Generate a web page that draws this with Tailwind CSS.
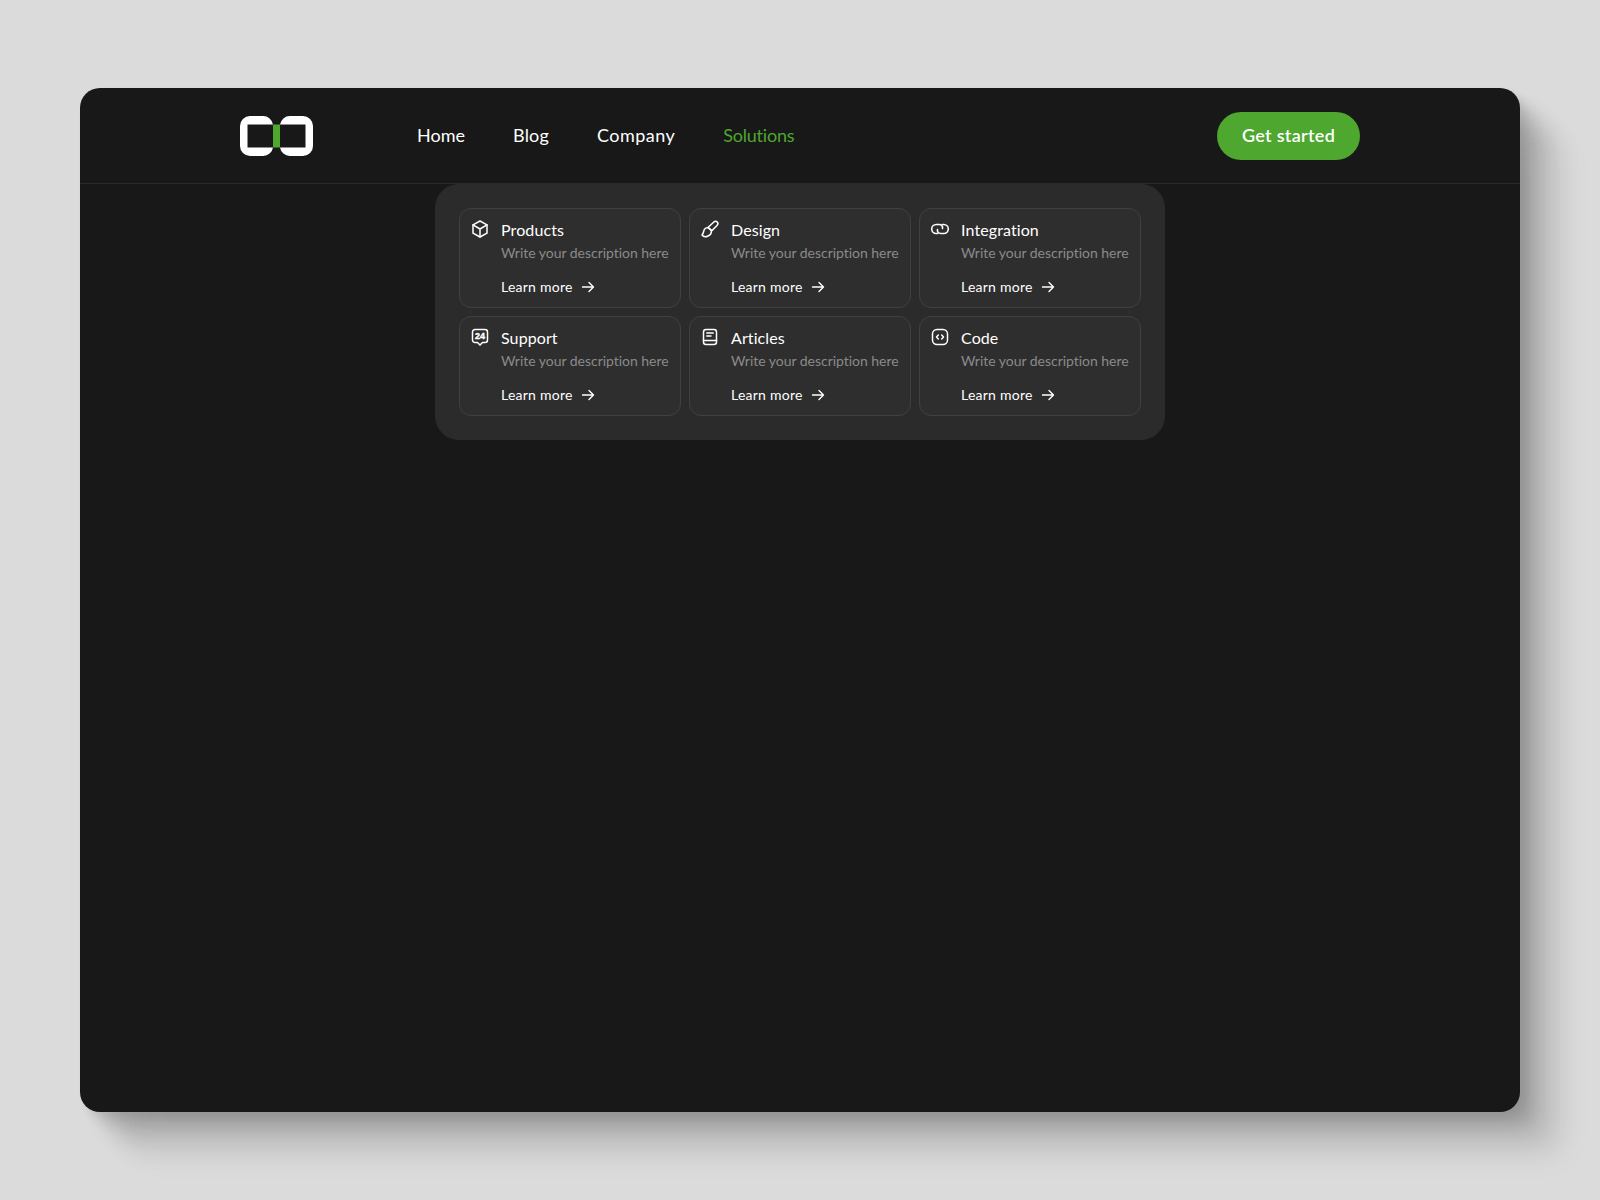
<!DOCTYPE html>
<html lang="en">
<head>
    <meta charset="UTF-8">
    <meta name="viewport" content="width=device-width, initial-scale=1.0">
    <title>Solutions menu</title>
    <script src="https://cdn.jsdelivr.net/npm/@tailwindcss/browser@4"></script>
</head>
<body class="min-h-screen bg-[#dbdbdb] font-['Lato',sans-serif]">
    <div class="pt-[88px] pl-[80px] pb-[88px]">
        <div class="w-[1440px] h-[1024px] rounded-[20px] bg-[#181818] shadow-[4px_4px_8px_rgba(0,0,0,0.06),12px_12px_14px_rgba(0,0,0,0.1),24px_24px_20px_rgba(0,0,0,0.1),38px_38px_24px_rgba(0,0,0,0.08),50px_50px_30px_rgba(0,0,0,0.03)]">
            <!-- Header -->
            <header class="h-[96px] px-[160px] flex items-center border-b border-[#2a2a2a]">
                <svg class="w-[73px] h-[40px] shrink-0" viewBox="0 0 73 40">
                    <path fill="#fff" fill-rule="evenodd" d="M10 0H23A10 10 0 0 1 33 8.5H7.5V31.5H33A10 10 0 0 1 23 40H10A10 10 0 0 1 0 30V10A10 10 0 0 1 10 0Z"/>
                    <path fill="#fff" fill-rule="evenodd" d="M50 0H63A10 10 0 0 1 73 10V30A10 10 0 0 1 63 40H50A10 10 0 0 1 40 31.5H65.5V8.5H40A10 10 0 0 1 50 0Z"/>
                    <rect x="33" y="8.5" width="7" height="23" fill="#4ea72e"/>
                </svg>
                <nav class="ml-[104px] flex items-center gap-[48px] text-[18px] text-white">
                    <a href="#">Home</a>
                    <a href="#" class="tracking-[0.2px]">Blog</a>
                    <a href="#" class="tracking-[0.45px]">Company</a>
                    <a href="#" class="text-[#4ea72e] tracking-[-0.2px]">Solutions</a>
                </nav>
                <button class="ml-auto w-[143px] h-[48px] rounded-full bg-[#4ea72e] text-white text-[18px] font-semibold tracking-[0.3px]">Get started</button>
            </header>

            <!-- Dropdown -->
            <div class="w-[730px] h-[256px] mx-auto p-[24px] rounded-[24px] bg-[#2b2b2b] grid grid-cols-3 gap-[8px]">
                <div class="h-[100px] rounded-[12px] border border-[#404040] bg-[#2e2e2e] pl-[10px] pt-[11px] flex gap-[11px]">
                    <svg class="w-[20px] h-[20px] shrink-0 mt-[-1px]" viewBox="0 0 20 20" fill="none" stroke="#fff" stroke-width="1.5" stroke-linejoin="round" stroke-linecap="round"><path d="M10 2 17 5.8V14.2L10 18 3 14.2V5.8Z"/><path d="M3 5.8 10 10 17 5.8M10 10V18"/></svg>
                    <div>
                        <div class="text-[16px] leading-[20px] text-white tracking-[0.1px]">Products</div>
                        <div class="mt-[3px] text-[14px] leading-[20px] text-[#8a8a8a] whitespace-nowrap tracking-[-0.03px]">Write your description here</div>
                        <div class="mt-[14px] flex items-center gap-[7px] text-[14px] leading-[20px] text-white tracking-[0.25px]">Learn more <svg class="w-[16px] h-[16px]" viewBox="0 0 16 16" fill="none" stroke="#fff" stroke-width="1.4" stroke-linecap="round" stroke-linejoin="round"><path d="M2.5 8H13.5M9 3.5 13.5 8 9 12.5"/></svg></div>
                    </div>
                </div>
                <div class="h-[100px] rounded-[12px] border border-[#404040] bg-[#2e2e2e] pl-[10px] pt-[11px] flex gap-[11px]">
                    <svg class="w-[20px] h-[20px] shrink-0 mt-[-1px]" viewBox="0 0 20 20" fill="none" stroke="#fff" stroke-width="1.5" stroke-linejoin="round" stroke-linecap="round"><path d="M8.2 8.2 13.6 3.2C14.8 2.2 16.6 2.4 17.3 3.1 18 3.8 18 5.3 17 6.4L11.8 11.8Z"/><path d="M8.2 8.6C5.8 8.8 4.2 10 3.8 12 3.4 14 2.8 15 2 16 3.5 18 6 18 8 17 10.5 16 11.5 14 11.4 11.8Z"/></svg>
                    <div>
                        <div class="text-[16px] leading-[20px] text-white tracking-[0.1px]">Design</div>
                        <div class="mt-[3px] text-[14px] leading-[20px] text-[#8a8a8a] whitespace-nowrap tracking-[-0.03px]">Write your description here</div>
                        <div class="mt-[14px] flex items-center gap-[7px] text-[14px] leading-[20px] text-white tracking-[0.25px]">Learn more <svg class="w-[16px] h-[16px]" viewBox="0 0 16 16" fill="none" stroke="#fff" stroke-width="1.4" stroke-linecap="round" stroke-linejoin="round"><path d="M2.5 8H13.5M9 3.5 13.5 8 9 12.5"/></svg></div>
                    </div>
                </div>
                <div class="h-[100px] rounded-[12px] border border-[#404040] bg-[#2e2e2e] pl-[10px] pt-[11px] flex gap-[11px]">
                    <svg class="w-[20px] h-[20px] shrink-0 mt-[-1px]" viewBox="0 0 20 20" fill="none" stroke="#fff" stroke-width="1.6" stroke-linecap="round"><path d="M7.5 14.5H6.2A4.2 4.2 0 0 1 6.2 5.5H9.5C11.5 5.5 13 7.2 12.5 9.5"/><path d="M12.5 5.5H13.8A4.2 4.2 0 0 1 13.8 14.5H10.5C8.5 14.5 7 12.8 7.5 10.5"/></svg>
                    <div>
                        <div class="text-[16px] leading-[20px] text-white tracking-[0.1px]">Integration</div>
                        <div class="mt-[3px] text-[14px] leading-[20px] text-[#8a8a8a] whitespace-nowrap tracking-[-0.03px]">Write your description here</div>
                        <div class="mt-[14px] flex items-center gap-[7px] text-[14px] leading-[20px] text-white tracking-[0.25px]">Learn more <svg class="w-[16px] h-[16px]" viewBox="0 0 16 16" fill="none" stroke="#fff" stroke-width="1.4" stroke-linecap="round" stroke-linejoin="round"><path d="M2.5 8H13.5M9 3.5 13.5 8 9 12.5"/></svg></div>
                    </div>
                </div>
                <div class="h-[100px] rounded-[12px] border border-[#404040] bg-[#2e2e2e] pl-[10px] pt-[11px] flex gap-[11px]">
                    <div class="relative w-[20px] h-[20px] shrink-0 mt-[-1px]">
                        <svg class="w-[20px] h-[20px]" viewBox="0 0 20 20" fill="none" stroke="#fff" stroke-width="1.5" stroke-linejoin="round"><path d="M5 2.5H15A2.5 2.5 0 0 1 17.5 5V13A2.5 2.5 0 0 1 15 15.5H12.5L10 18 7.5 15.5H5A2.5 2.5 0 0 1 2.5 13V5A2.5 2.5 0 0 1 5 2.5Z"/></svg>
                        <span class="absolute left-0 top-[4px] w-[20px] text-center text-[9px] leading-[10px] font-bold text-white font-['Liberation_Sans',sans-serif] [-webkit-text-stroke:0.4px_#fff]">24</span>
                    </div>
                    <div>
                        <div class="text-[16px] leading-[20px] text-white tracking-[0.1px]">Support</div>
                        <div class="mt-[3px] text-[14px] leading-[20px] text-[#8a8a8a] whitespace-nowrap tracking-[-0.03px]">Write your description here</div>
                        <div class="mt-[14px] flex items-center gap-[7px] text-[14px] leading-[20px] text-white tracking-[0.25px]">Learn more <svg class="w-[16px] h-[16px]" viewBox="0 0 16 16" fill="none" stroke="#fff" stroke-width="1.4" stroke-linecap="round" stroke-linejoin="round"><path d="M2.5 8H13.5M9 3.5 13.5 8 9 12.5"/></svg></div>
                    </div>
                </div>
                <div class="h-[100px] rounded-[12px] border border-[#404040] bg-[#2e2e2e] pl-[10px] pt-[11px] flex gap-[11px]">
                    <svg class="w-[20px] h-[20px] shrink-0 mt-[-1px]" viewBox="0 0 20 20" fill="none" stroke="#fff" stroke-width="1.5" stroke-linecap="round" stroke-linejoin="round"><rect x="3.5" y="2.5" width="13" height="15" rx="2.5"/><path d="M3.5 13.5H16.5M6.8 6H13.2M6.8 9H11"/></svg>
                    <div>
                        <div class="text-[16px] leading-[20px] text-white tracking-[0.1px]">Articles</div>
                        <div class="mt-[3px] text-[14px] leading-[20px] text-[#8a8a8a] whitespace-nowrap tracking-[-0.03px]">Write your description here</div>
                        <div class="mt-[14px] flex items-center gap-[7px] text-[14px] leading-[20px] text-white tracking-[0.25px]">Learn more <svg class="w-[16px] h-[16px]" viewBox="0 0 16 16" fill="none" stroke="#fff" stroke-width="1.4" stroke-linecap="round" stroke-linejoin="round"><path d="M2.5 8H13.5M9 3.5 13.5 8 9 12.5"/></svg></div>
                    </div>
                </div>
                <div class="h-[100px] rounded-[12px] border border-[#404040] bg-[#2e2e2e] pl-[10px] pt-[11px] flex gap-[11px]">
                    <svg class="w-[20px] h-[20px] shrink-0 mt-[-1px]" viewBox="0 0 20 20" fill="none" stroke="#fff" stroke-width="1.5" stroke-linecap="round" stroke-linejoin="round"><rect x="2.5" y="2.5" width="15" height="15" rx="4.5"/><path d="M8.3 8 6.5 10 8.3 12M11.7 8 13.5 10 11.7 12"/></svg>
                    <div>
                        <div class="text-[16px] leading-[20px] text-white tracking-[0.1px]">Code</div>
                        <div class="mt-[3px] text-[14px] leading-[20px] text-[#8a8a8a] whitespace-nowrap tracking-[-0.03px]">Write your description here</div>
                        <div class="mt-[14px] flex items-center gap-[7px] text-[14px] leading-[20px] text-white tracking-[0.25px]">Learn more <svg class="w-[16px] h-[16px]" viewBox="0 0 16 16" fill="none" stroke="#fff" stroke-width="1.4" stroke-linecap="round" stroke-linejoin="round"><path d="M2.5 8H13.5M9 3.5 13.5 8 9 12.5"/></svg></div>
                    </div>
                </div>
            </div>
        </div>
    </div>
</body>
</html>
